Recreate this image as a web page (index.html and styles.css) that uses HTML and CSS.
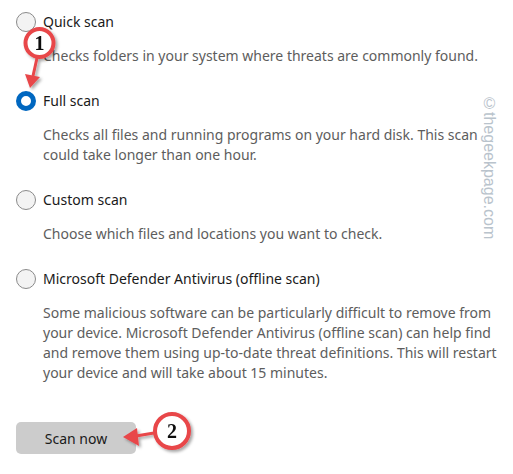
FILE: index.html
```html
<!DOCTYPE html>
<html lang="en">
<head>
  <meta charset="UTF-8" />
  <title>Scan options</title>
  <link rel="stylesheet" href="styles.css">
</head>
<body>
  <div class="panel">
    <div class="option">
      <div class="choice"><span class="radio"></span>Quick scan</div>
      <p class="desc">Checks folders in your system where threats are commonly found.</p>
    </div>

    <div class="option">
      <div class="choice"><span class="radio checked"></span>Full scan</div>
      <p class="desc">Checks all files and running programs on your hard disk. This scan<br>could take longer than one hour.</p>
    </div>

    <div class="option">
      <div class="choice"><span class="radio"></span>Custom scan</div>
      <p class="desc">Choose which files and locations you want to check.</p>
    </div>

    <div class="option last">
      <div class="choice"><span class="radio"></span>Microsoft Defender Antivirus (offline scan)</div>
      <p class="desc">Some malicious software can be particularly difficult to remove from<br>your device. Microsoft Defender Antivirus (offline scan) can help find<br>and remove them using up-to-date threat definitions. This will restart<br>your device and will take about 15 minutes.</p>
    </div>

    <button class="scan-btn">Scan now</button>
  </div>

  <div class="watermark">©thegeekpage.com</div>

  <!-- step markers -->
  <svg class="marks" width="513" height="474" viewBox="0 0 513 474">
    <defs>
      <filter id="shadow" x="-30%" y="-30%" width="170%" height="170%">
        <feDropShadow dx="2" dy="2" stdDeviation="1.5" flood-color="#000" flood-opacity="0.35"/>
      </filter>
    </defs>
    <g filter="url(#shadow)">
      <line x1="37" y1="58" x2="33" y2="76" stroke="#e8464a" stroke-width="3"/>
      <polygon points="30,88 25,74 40,77" fill="#e8464a"/>
      <circle cx="39.5" cy="43" r="14" fill="#fff" stroke="#e8464a" stroke-width="4"/>
      <text x="39.5" y="50" class="num">1</text>
    </g>
    <g filter="url(#shadow)">
      <line x1="154" y1="433" x2="136" y2="436" stroke="#e8464a" stroke-width="3"/>
      <polygon points="123,437 137,428 139,446" fill="#e8464a"/>
      <circle cx="172" cy="431" r="17" fill="#fff" stroke="#e8464a" stroke-width="4"/>
      <text x="172" y="438" class="num">2</text>
    </g>
  </svg>
</body>
</html>
```

FILE: styles.css
```css
body {
  margin: 0;
  background: #fff;
  font-family: "Noto Sans", "Open Sans", sans-serif;
  font-size: 14px;
  color: #1a1a1a;
  position: relative;
  width: 513px;
  height: 474px;
  overflow: hidden;
}
.panel {
  padding: 12px 16px;
}
.option {
  margin-bottom: 25px;
}
.option.last {
  margin-bottom: 39px;
}
.choice {
  display: flex;
  align-items: center;
  gap: 7px;
  height: 20px;
  line-height: 20px;
}
.radio {
  width: 20px;
  height: 20px;
  box-sizing: border-box;
  border-radius: 50%;
  border: 1px solid #8a8a8a;
  background: #f3f3f3;
}
.radio.checked {
  border: 5px solid #0067c0;
  background: #fff;
}
.desc {
  margin: 14px 0 0 27px;
  line-height: 20px;
  color: #5d5d5d;
  white-space: nowrap;
}
.scan-btn {
  display: block;
  width: 120px;
  height: 32px;
  border: 0;
  border-radius: 5px;
  background: #cccccc;
  font: inherit;
  color: #1a1a1a;
  padding: 0;
}

/* watermark + markers sit over the page */
.watermark {
  position: absolute;
  left: 482px;
  top: 95px;
  writing-mode: vertical-rl;
  font-family: "Liberation Sans", sans-serif;
  font-size: 16px;
  line-height: 15px;
  color: #b9c3cc;
}
.marks {
  position: absolute;
  left: 0;
  top: 0;
  pointer-events: none;
}
.num {
  font-family: "Liberation Serif", serif;
  font-weight: bold;
  font-size: 20px;
  text-anchor: middle;
  fill: #111;
}
```
